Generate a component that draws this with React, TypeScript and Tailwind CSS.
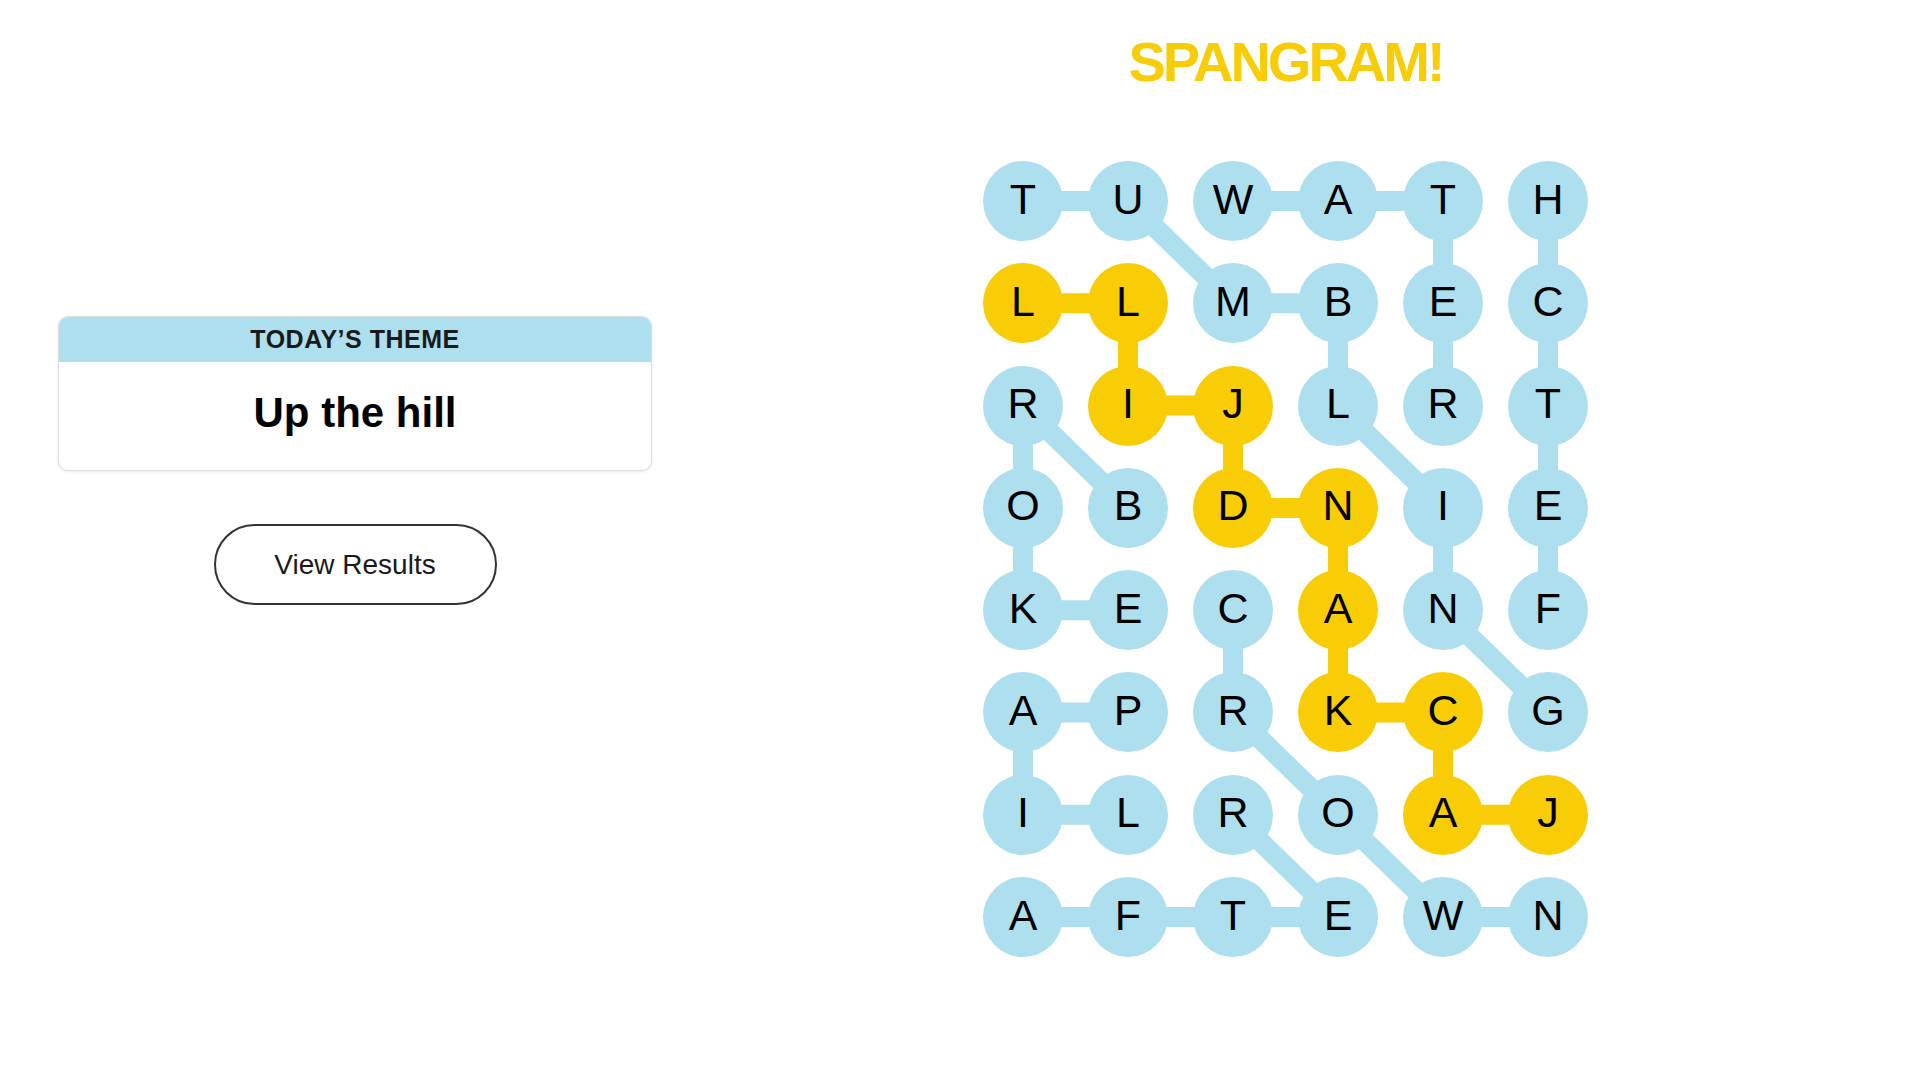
const LETTERS = [
  "TUWATH",
  "LLMBEC",
  "RIJLRT",
  "OBDNIE",
  "KECANF",
  "APRKCG",
  "ILROAJ",
  "AFTEWN",
];

// cells belonging to the spangram (row, col)
const SPANGRAM_CELLS = new Set([
  "1,0", "1,1", "2,1", "2,2", "3,2", "3,3", "4,3", "5,3", "5,4", "6,4", "6,5",
]);

type Edge = [number, number, number, number];

const BLUE_EDGES: Edge[] = [
  [0, 0, 0, 1], [0, 2, 0, 3], [0, 3, 0, 4], [0, 1, 1, 2], [0, 4, 1, 4],
  [0, 5, 1, 5], [1, 2, 1, 3], [1, 3, 2, 3], [1, 4, 2, 4], [1, 5, 2, 5],
  [2, 0, 3, 0], [2, 0, 3, 1], [2, 3, 3, 4], [2, 5, 3, 5], [3, 0, 4, 0],
  [3, 4, 4, 4], [3, 5, 4, 5], [4, 0, 4, 1], [4, 2, 5, 2], [4, 4, 5, 5],
  [5, 0, 5, 1], [5, 0, 6, 0], [5, 2, 6, 3], [6, 0, 6, 1], [6, 2, 7, 3],
  [6, 3, 7, 4], [7, 0, 7, 1], [7, 1, 7, 2], [7, 2, 7, 3], [7, 4, 7, 5],
];

const YELLOW_EDGES: Edge[] = [
  [1, 0, 1, 1], [1, 1, 2, 1], [2, 1, 2, 2], [2, 2, 3, 2], [3, 2, 3, 3],
  [3, 3, 4, 3], [4, 3, 5, 3], [5, 3, 5, 4], [5, 4, 6, 4], [6, 4, 6, 5],
];

const COL_STEP = 105;
const ROW_STEP = 102.3;
const R = 40;
const W = 5 * COL_STEP + 2 * R; // 605
const H = 7 * ROW_STEP + 2 * R; // 796.1

const cx = (c: number) => R + c * COL_STEP;
const cy = (r: number) => R + r * ROW_STEP;

function Board() {
  return (
    <div className="relative w-[605px] h-[796px]">
      {/* connectors between letters */}
      <svg className="absolute inset-0" width={W} height={H} viewBox={`0 0 ${W} ${H}`}>
        {BLUE_EDGES.map(([r1, c1, r2, c2], i) => (
          <line key={"b" + i} x1={cx(c1)} y1={cy(r1)} x2={cx(c2)} y2={cy(r2)} stroke="#aedfee" strokeWidth="20" />
        ))}
        {YELLOW_EDGES.map(([r1, c1, r2, c2], i) => (
          <line key={"y" + i} x1={cx(c1)} y1={cy(r1)} x2={cx(c2)} y2={cy(r2)} stroke="#f8cd05" strokeWidth="20" />
        ))}
      </svg>

      <div className="relative grid grid-cols-6 gap-x-[25px] gap-y-[22.3px]">
        {LETTERS.map((row, r) =>
          row.split("").map((ch, c) => (
            <div
              key={r + "-" + c}
              className={
                SPANGRAM_CELLS.has(r + "," + c)
                  ? "w-20 h-20 rounded-full bg-[#f8cd05] flex items-center justify-center"
                  : "w-20 h-20 rounded-full bg-[#aedfee] flex items-center justify-center"
              }
            >
              <span className="text-[43px] leading-none text-black -translate-y-[2px]">{ch}</span>
            </div>
          ))
        )}
      </div>
    </div>
  );
}

export default function App() {
  return (
    <div className="min-h-screen bg-white flex font-['Liberation_Sans',Arial,sans-serif]">
      {/* left column: theme card + results button */}
      <div className="w-[652px] pl-[58px] pt-[316px] flex flex-col items-center">
        <div className="w-full rounded-[10px] border border-[#dedede] shadow-[0_1px_3px_rgba(0,0,0,0.08)] overflow-hidden bg-white">
          <div className="h-[45px] bg-[#aedfee] flex items-center justify-center">
            <span className="text-[25px] font-bold leading-none text-[#1a1a1a] tracking-[0.5px]">TODAY’S THEME</span>
          </div>
          <div className="h-[108px] flex items-center justify-center pb-[6px]">
            <span className="text-[42px] font-bold leading-none text-black">Up the hill</span>
          </div>
        </div>

        <button className="mt-[53px] w-[283px] h-[81px] rounded-full border-2 border-[#333] bg-white flex items-center justify-center">
          <span className="text-[28px] leading-none text-[#1a1a1a]">View Results</span>
        </button>
      </div>

      {/* right column: spangram banner + board */}
      <div className="ml-[331px] w-[605px] flex flex-col items-center">
        <div className="mt-[34px] h-[56px] text-[56px] leading-none font-bold text-[#f8cd05] tracking-[-3px]">
          SPANGRAM!
        </div>
        <div className="mt-[71px]">
          <Board />
        </div>
      </div>
    </div>
  );
}
